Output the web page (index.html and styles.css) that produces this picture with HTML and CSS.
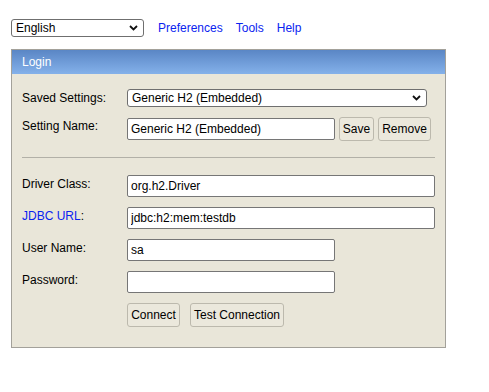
FILE: index.html
```html
<!DOCTYPE html>
<html>
<head>
<meta charset="utf-8">
<link rel="stylesheet" href="styles.css">
</head>
<body>
<div class="topbar">
  <span class="select-wrap lang">
    <select class="select"><option>English</option></select>
    <svg class="chev" width="9" height="6" viewBox="0 0 9 6"><polyline points="1,1 4.5,4.5 8,1" fill="none" stroke="#111" stroke-width="1.8"/></svg>
  </span>
  <nav class="links">
    <a href="#">Preferences</a>
    <a href="#">Tools</a>
    <a href="#">Help</a>
  </nav>
</div>

<div class="panel">
  <div class="panel-head">Login</div>
  <div class="panel-body">
    <div class="row">
      <label class="lbl">Saved Settings:</label>
      <span class="select-wrap saved">
        <select class="select"><option>Generic H2 (Embedded)</option></select>
        <svg class="chev" width="9" height="6" viewBox="0 0 9 6"><polyline points="1,1 4.5,4.5 8,1" fill="none" stroke="#111" stroke-width="1.8"/></svg>
      </span>
    </div>
    <div class="row row-name">
      <label class="lbl">Setting Name:</label>
      <div class="field-line">
        <input class="input short" type="text" value="Generic H2 (Embedded)">
        <button class="btn btn-save">Save</button>
        <button class="btn btn-remove">Remove</button>
      </div>
    </div>
    <div class="sep"></div>
    <div class="row row-after-sep">
      <label class="lbl">Driver Class:</label>
      <input class="input long" type="text" value="org.h2.Driver">
    </div>
    <div class="row">
      <label class="lbl"><a href="#">JDBC URL</a>:</label>
      <input class="input long" type="text" value="jdbc:h2:mem:testdb">
    </div>
    <div class="row">
      <label class="lbl">User Name:</label>
      <input class="input short" type="text" value="sa">
    </div>
    <div class="row">
      <label class="lbl">Password:</label>
      <input class="input short" type="password" value="">
    </div>
    <div class="row row-actions">
      <span></span>
      <div class="field-line gap10">
        <button class="btn btn-connect">Connect</button>
        <button class="btn btn-test">Test Connection</button>
      </div>
    </div>
  </div>
</div>
</body>
</html>
```
FILE: styles.css
```css
* { box-sizing: border-box; }
html, body { background: #fff; }
body {
  margin: 0;
  padding: 19px 11px;
  font-family: "Liberation Sans", Arial, Helvetica, sans-serif;
  font-size: 12px;
  line-height: 14px;
  color: #000;
}
a { color: #0a23f0; text-decoration: none; }

.topbar {
  display: flex;
  align-items: center;
  height: 18px;
}
.links {
  display: flex;
  gap: 13px;
  margin-left: 14px;
  font-size: 12px;
}

.select-wrap {
  position: relative;
  display: inline-block;
  height: 18px;
}
.select-wrap.lang { width: 133px; }
.select-wrap.saved { width: 300px; }
.select {
  appearance: none;
  -webkit-appearance: none;
  width: 100%;
  height: 18px;
  margin: 0;
  padding: 0 0 0 4px;
  border: 1px solid #6f6f6f;
  border-radius: 3px;
  background: #fff;
  font: 12px/16px "Liberation Sans", Arial, sans-serif;
  color: #000;
}
.chev {
  position: absolute;
  right: 6px;
  top: 6px;
  pointer-events: none;
}

.panel {
  margin-top: 12px;
  width: 435px;
  border: 1px solid #a3a19a;
  background: #e9e6d9;
}
.panel-head {
  height: 24px;
  line-height: 24px;
  padding-left: 10px;
  color: #fff;
  background: linear-gradient(#5a86c5, #84b1ea);
}
.panel-body {
  padding: 15px 10px 20px 10px;
  display: flex;
  flex-direction: column;
}
.row {
  display: grid;
  grid-template-columns: 105px 1fr;
  align-items: start;
  margin-top: 10px;
}
.row:first-child { margin-top: 0; }
.row.row-after-sep { margin-top: 0; }
.lbl { padding-top: 2px; }

.field-line {
  display: flex;
  align-items: center;
  gap: 4px;
}
.field-line.gap10 { gap: 10px; }

.input {
  height: 22px;
  margin: 0;
  padding: 0 3px;
  border: 1px solid #767676;
  border-radius: 2px;
  background: #fff;
  font: 12px "Liberation Sans", Arial, sans-serif;
  color: #000;
  outline: none;
}
.input.short { width: 208px; }
.input.long { width: 308px; }

.btn {
  height: 24px;
  margin: 0;
  padding: 0;
  border: 1px solid #bcb9ad;
  border-radius: 3px;
  background: #ebe8dc;
  font: 12px "Liberation Sans", Arial, sans-serif;
  color: #000;
  text-align: center;
}
.btn-save { width: 35px; }
.btn-remove { width: 53px; }
.btn-connect { width: 53px; }
.btn-test { width: 94px; }

.sep {
  height: 1px;
  background: #b2b0a7;
  margin: 16px 0 17px 0;
}
```
